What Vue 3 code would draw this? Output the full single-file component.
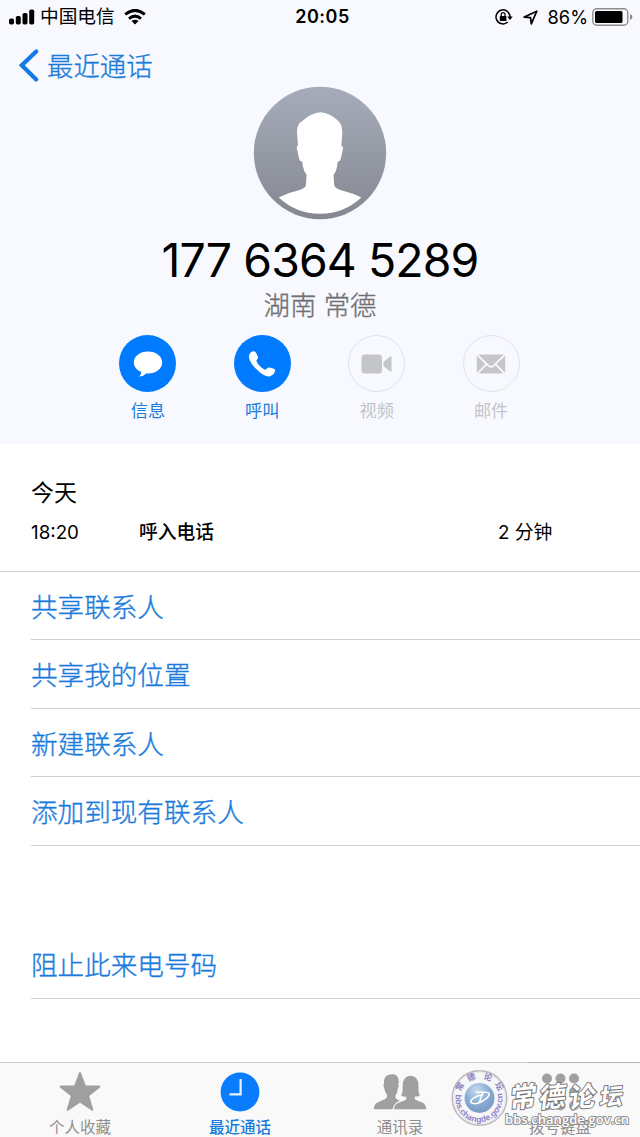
<template>
  <div class="screen">
    <header class="contact-header">
      <div class="status-bar">
        <div class="status-left">
          <svg class="signal" width="26" height="16" viewBox="0 0 26 16">
            <rect x="0" y="9.5" width="5" height="6" rx="1.8" />
            <rect x="6.8" y="7" width="5" height="8.5" rx="1.8" />
            <rect x="13.5" y="4" width="5" height="11.5" rx="1.8" />
            <rect x="20.2" y="0.5" width="5" height="15" rx="1.8" />
          </svg>
          <span class="carrier">中国电信</span>
          <svg class="wifi" width="22" height="16" viewBox="0 0 22 16" fill="none" stroke="#000" stroke-width="3">
            <path d="M1.2 5.4Q11 -2.7 20.8 5.4" />
            <path d="M5 9.6Q11 4.7 17 9.6" />
            <path d="M11 15.4L7.5 12Q11 9.4 14.5 12Z" fill="#000" stroke="none" />
          </svg>
        </div>
        <div class="clock">20:05</div>
        <div class="status-right">
          <svg class="lock" width="18" height="16" viewBox="0 0 18 16">
            <path d="M12.8 13A7 7 0 1 1 15 8.5" fill="none" stroke="#000" stroke-width="1.5" />
            <path d="M12.3 7.5H17.7L15 11Z" />
            <rect x="4.8" y="7" width="6.6" height="5" rx=".6" />
            <path d="M6.2 7V5.6A1.9 1.9 0 0 1 10 5.6V7" fill="none" stroke="#000" stroke-width="1.2" />
          </svg>
          <svg class="arrow" width="15" height="15" viewBox="0 0 15 15">
            <path d="M1.2 7.1L13.8 1.2L8.3 13.8L7.5 7.6Z" fill="none" stroke="#000" stroke-width="1.7" stroke-linejoin="round" />
          </svg>
          <span class="percent">86%</span>
          <svg class="battery" width="41" height="18" viewBox="0 0 41 18">
            <rect x=".8" y=".8" width="35" height="16.4" rx="4" fill="none" stroke="#8b8b90" stroke-width="1.4" />
            <rect x="3" y="3" width="27.5" height="12" rx="1.5" />
            <path d="M38 6Q40.4 7 40.4 9T38 12Z" fill="#8b8b90" />
          </svg>
        </div>
      </div>

      <div class="nav">
        <svg width="20" height="33" viewBox="0 0 20 33">
          <path d="M17.2 2.4L2.8 16.3L17.2 30.4" fill="none" stroke="#127be8" stroke-width="4.2" stroke-linecap="round" stroke-linejoin="miter" />
        </svg>
        <span class="back-label">最近通话</span>
      </div>

      <svg class="avatar" width="134" height="134" viewBox="0 0 134 134">
        <defs>
          <linearGradient id="avatarFill" x1="0" y1="0" x2="0" y2="1">
            <stop offset="0" stop-color="#a6acba" />
            <stop offset="1" stop-color="#858891" />
          </linearGradient>
        </defs>
        <circle cx="67" cy="67" r="66.2" fill="url(#avatarFill)" />
        <path d="M25.8 111.5Q34 107 45 104.5Q52 102.5 52.8 99.5L53.6 89Q50.8 85.5 49.8 80L49.2 75.5Q46.3 75.5 45.8 71L43.6 61.5Q43.3 60 45 60L44 46Q43.6 38 50 34.5Q58 27 67.5 26.3Q77 27.5 83 33Q89.5 37 89.3 47L88.3 60Q90.5 60 90 62.5L88.2 71Q87.5 75.5 84.8 75.5L84 81Q83.3 85.5 80.5 89L81.2 99Q82 102.5 89 104.5Q99.5 107 108.3 111.5Q91 127.7 67 127.7T25.8 111.5Z" fill="#fff" />
      </svg>

      <h1 class="number">177 6364 5289</h1>
      <p class="region">湖南 常德</p>

      <div class="actions">
        <div v-for="a in actions" :key="a.icon" class="action" :class="{ disabled: a.disabled }">
          <div class="action-circle">
            <svg v-if="a.icon === 'message'" width="30" height="28" viewBox="0 0 30 28">
              <path d="M15 1.5C7 1.5 .8 6.3 .8 12.4C.8 16.3 3.7 20 8.2 21.8Q8.7 24.3 6.2 26.4Q10.8 26.2 13.3 23.4C22.3 24 29.2 19 29.2 12.4C29.2 6.3 23 1.5 15 1.5Z" fill="#fff" />
            </svg>
            <svg v-else-if="a.icon === 'call'" width="28" height="28" viewBox="0 0 28 28">
              <path d="M2 3.3Q3.6 1 6 1.2Q7.3 1.3 8.2 3L9.8 6.4Q10.7 8.5 8.8 9.7Q8.1 10.3 8.7 11.5C10.2 14.8 13 17.8 16.5 19.6Q17.6 20.2 18.3 19.1Q19.5 17.2 21.6 17.6L25.8 18.7Q27.7 19.3 27 21.3Q25.9 25.3 21.5 26.4Q17.5 26.7 12 22.4C6 17.7 2.2 12.6 1.2 8.6Q.4 5.7 2 3.3Z" fill="#fff" />
            </svg>
            <svg v-else-if="a.icon === 'video'" width="31" height="20" viewBox="0 0 31 20">
              <rect x=".5" y=".5" width="20.5" height="19" rx="3.5" fill="#c5c6ca" />
              <path d="M22.5 8L29.4 2.3Q30.5 1.8 30.5 3V17Q30.5 18.3 29.4 17.6L22.5 12.2Z" fill="#c5c6ca" />
            </svg>
            <svg v-else width="30" height="20" viewBox="0 0 30 20">
              <rect x=".8" y=".5" width="28.4" height="19" fill="#c5c6ca" />
              <path d="M.8 .4L12.3 11.6Q15 14 17.7 11.6L29.2 .4M1 20L10.4 10.2M29 20L19.6 10.2" fill="none" stroke="#f8f9fe" stroke-width="1.8" />
            </svg>
          </div>
          <span class="action-label">{{ a.label }}</span>
        </div>
      </div>
    </header>

    <main>
      <section class="history">
        <h2 class="day">今天</h2>
        <div class="call">
          <span class="call-time">18:20</span>
          <span class="call-type">呼入电话</span>
          <span class="call-length">2 分钟</span>
        </div>
      </section>

      <ul class="links">
        <li v-for="l in links" :key="l">{{ l }}</li>
      </ul>
      <ul class="links block">
        <li>阻止此来电号码</li>
      </ul>
    </main>

    <footer class="tab-bar">
      <div v-for="t in tabs" :key="t.icon" class="tab" :class="{ active: t.active }">
        <div class="tab-icon">
          <svg v-if="t.icon === 'star'" width="44" height="42" viewBox="0 0 44 42">
            <path d="M22 2.2L27 15.6H41.3L30 24.7L34.2 38.6L22 30.4L9.8 38.6L14 24.7L2.7 15.6H17Z" fill="#a0a0a0" stroke="#a0a0a0" stroke-width="2.2" stroke-linejoin="round" />
          </svg>
          <svg v-else-if="t.icon === 'recent'" width="40" height="42" viewBox="0 0 40 42">
            <circle cx="20" cy="21" r="19.4" fill="#087cfd" />
            <path d="M20.6 8V23.3H9.5" fill="none" stroke="#e9f4ff" stroke-width="2.2" />
          </svg>
          <svg v-else-if="t.icon === 'people'" width="54" height="42" viewBox="0 0 54 42">
            <path d="M.8 38.2Q1 33.5 4 31.8L12.3 28Q14.4 26.8 14.2 24Q11.5 20.5 11.2 17Q9.7 14 11 12.5Q10.5 5 16 3.8Q24 1.8 25.5 8Q26 10.5 25.4 13Q26.5 14.5 24.8 17.7Q24.5 22 22.2 24.7Q22.3 27.5 24.2 28.5L26.8 29.8Q20.8 32 19.5 38.2Z" fill="#a0a0a0" />
            <path d="M21 38.2Q21.5 33.5 25 32L33.2 28.7V25.5Q29.7 26 28 24.5Q30 22 29.6 15Q29.8 5 37.5 4.8Q45.5 5.2 45.5 15Q45.2 21.5 46.8 24.4Q45 26 41.8 25.5V28.6L49.7 31.8Q53 33.5 53.3 38.2Z" fill="#a0a0a0" />
          </svg>
          <svg v-else width="40" height="42" viewBox="0 0 40 42">
            <circle v-for="n in 9" :key="n" :cx="7 + ((n - 1) % 3) * 13.5" :cy="7.5 + Math.floor((n - 1) / 3) * 13.5" r="5" fill="#a0a0a0" />
          </svg>
        </div>
        <span class="tab-label">{{ t.label }}</span>
      </div>

      <svg class="watermark" width="191" height="76" viewBox="0 0 191 76">
        <defs>
          <radialGradient id="globe" cx=".4" cy=".25" r=".8">
            <stop offset="0" stop-color="#c9dbef" />
            <stop offset=".5" stop-color="#8baed6" />
            <stop offset="1" stop-color="#7898c5" />
          </radialGradient>
          <path id="ringBottom" d="M8 28.5A23.5 23.5 0 1 0 52 28.5" />
        </defs>
        <path d="M79 .5H191" stroke="#b2b2b4" />
        <circle cx="30.5" cy="36" r="27.3" fill="#f7f7fa" stroke="#b9b9bd" stroke-width="1.4" />
        <circle cx="30.5" cy="36" r="25.8" fill="none" stroke="#e1e1e5" stroke-width=".8" />
        <circle cx="30.5" cy="36" r="15" fill="url(#globe)" />
        <path d="M27 30.5Q38 29.2 40 31.5C41 34.5 33 41 26.5 41.8Q19.5 41.5 22.8 37.5Q27.5 33.5 34.5 32.5M34 30.5L29.5 42" fill="none" stroke="#fff" stroke-width="1.6" />
        <g class="seal-cjk">
          <text transform="translate(13.5 26) rotate(-62)">常</text>
          <text transform="translate(23.3 18) rotate(-20)">德</text>
          <text transform="translate(38 18) rotate(19)">论</text>
          <text transform="translate(47.5 26) rotate(60)">坛</text>
        </g>
        <text class="seal-url"><textPath href="#ringBottom" startOffset="4" textLength="84">bbs.changde.gov.cn</textPath></text>
        <g class="forum-name">
          <text transform="translate(60 46) rotate(-6) skewX(-12)" font-size="27">常</text>
          <text transform="translate(89 46) rotate(-5) skewX(-12)" font-size="27">德</text>
          <text transform="translate(119 46) rotate(-5) skewX(-12)" font-size="27">论</text>
          <text transform="translate(150 44) rotate(-5) skewX(-12)" font-size="23">坛</text>
        </g>
        <text class="forum-url" x="56" y="62" textLength="124">bbs.changde.gov.cn</text>
      </svg>
    </footer>
  </div>
</template>

<script setup>
const actions = [
  { icon: 'message', label: '信息' },
  { icon: 'call', label: '呼叫' },
  { icon: 'video', label: '视频', disabled: true },
  { icon: 'mail', label: '邮件', disabled: true },
]

const links = ['共享联系人', '共享我的位置', '新建联系人', '添加到现有联系人']

const tabs = [
  { icon: 'star', label: '个人收藏' },
  { icon: 'recent', label: '最近通话', active: true },
  { icon: 'people', label: '通讯录' },
  { icon: 'keypad', label: '拨号键盘' },
]
</script>

<style>
body { margin: 0; background: #fff; }
</style>

<style scoped>
.screen {
  width: 640px;
  height: 1137px;
  display: flex;
  flex-direction: column;
  overflow: hidden;
  background: #fff;
  color: #000;
  font-family: Inter, "Noto Sans CJK SC", sans-serif;
}
svg { display: block; flex: none; }
h1, h2, p, ul { margin: 0; padding: 0; font-weight: 400; }

/* Header */
.contact-header {
  height: 444px;
  background: #f8f9fe;
  display: flex;
  flex-direction: column;
  align-items: center;
  flex: none;
}
.status-bar {
  width: 100%;
  height: 32px;
  display: grid;
  grid-template-columns: 1fr 80px 1fr;
  align-items: center;
  line-height: 34px;
}
.status-left { display: flex; align-items: center; padding-left: 9px; }
.carrier { font-size: 18.7px; margin-left: 5px; }
.wifi { margin-left: 9px; }
.clock { text-align: center; font-size: 18px; font-weight: 600; letter-spacing: 0.5px; padding-left: 5px; }
.status-right { display: flex; align-items: center; justify-content: flex-end; padding-right: 7px; }
.lock { margin-right: 1px; }
.arrow { margin-left: 9px; }
.percent { font-size: 18.2px; margin-left: 10px; }
.battery { margin-left: 4px; }

.nav { width: 100%; height: 54px; display: flex; align-items: center; padding: 13px 0 0 19px; box-sizing: border-box; }
.back-label { color: #1b7bdc; font-size: 26.4px; font-weight: 300; line-height: 40px; margin-left: 8px; -webkit-text-stroke: 0.35px; }

.number { font-size: 46.4px; line-height: 60px; margin-top: 10px; white-space: nowrap; letter-spacing: -0.9px; }
.region { font-size: 26.4px; font-weight: 300; line-height: 32px; color: #717175; margin-top: -1px; -webkit-text-stroke: 0.35px; }

.actions { display: flex; margin-top: 14px; padding-right: 1px; }
.action { width: 114.4px; display: flex; flex-direction: column; align-items: center; color: #1b7bdc; }
.action-circle {
  width: 57px;
  height: 57px;
  border-radius: 50%;
  background: #007aff;
  display: flex;
  align-items: center;
  justify-content: center;
  box-sizing: border-box;
}
.action-label { font-size: 17.2px; line-height: 24px; margin-top: 7px; }
.disabled { color: #c3c4c9; }
.disabled .action-circle { background: transparent; border: 1.5px solid #e1e2e7; }

/* Call history */
.history { height: 128px; box-sizing: border-box; padding: 33px 0 0 31px; border-bottom: 1px solid #cfcfd2; }
.day { font-size: 23px; line-height: 32px; }
.call { display: grid; grid-template-columns: 108px 359px auto; font-size: 18.8px; line-height: 28px; margin-top: 10px; }
.call-type { font-weight: 500; }

/* Link rows */
.links { list-style: none; margin-left: 31px; }
.links li { height: 68.4px; box-sizing: border-box; border-bottom: 1px solid #d2d2d4; color: #1b7bdc; font-size: 26.6px; font-weight: 300; line-height: 71px; -webkit-text-stroke: 0.35px; }
.block { margin-top: 84.9px; }

/* Tab bar */
.tab-bar { position: relative; margin-top: auto; height: 75px; box-sizing: border-box; border-top: 1px solid #cdcdd0; background: #f9f9f9; display: flex; }
.tab { flex: 1; display: flex; flex-direction: column; align-items: center; padding-top: 8px; color: #8f8f8f; }
.tab-icon { height: 42px; }
.tab-label { font-size: 15.5px; line-height: 18px; margin-top: 6px; }
.active { color: #177bdf; }
.active .tab-label { font-weight: 500; }

/* Forum watermark over the last tab */
.watermark { position: absolute; left: 449px; top: -1px; }
.seal-cjk { font: 700 8.5px "Noto Sans CJK SC", sans-serif; fill: #8c83bd; text-anchor: middle; }
.seal-url { font: 700 8.5px "Liberation Sans", sans-serif; fill: #8c83c5; }
.forum-name { font-family: "Noto Sans CJK SC", sans-serif; font-weight: 700; fill: #fff; stroke: #777; stroke-width: 2px; paint-order: stroke; stroke-linejoin: round; }
.forum-url { font: 600 13px "Open Sans", sans-serif; fill: #fff; stroke: #8f8f8f; stroke-width: 2px; paint-order: stroke; stroke-linejoin: round; }
</style>
